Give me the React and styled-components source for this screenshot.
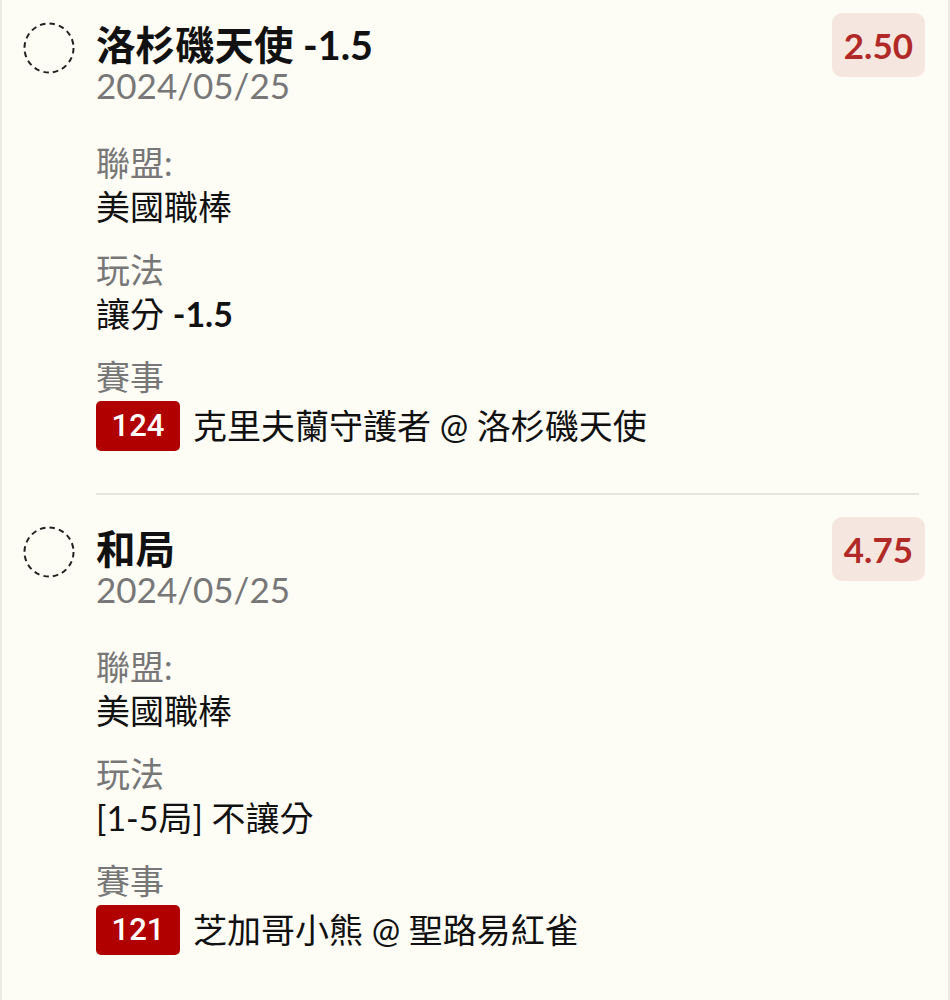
import React from 'react'
import styled, { createGlobalStyle } from 'styled-components'

const GlobalStyle = createGlobalStyle`
    html, body {
        margin: 0;
        background: #fdfcf5;
    }
    body {
        font-family: Lato, "Noto Sans CJK TC", sans-serif;
        color: #111;
    }
`

const Page = styled.div`
    min-height: 1000px;
    box-sizing: border-box;
    border-left: 2px solid #eceae2;
    border-right: 2px solid #eceae2;
    padding: 0 24px 0 21px;
`

const Item = styled.div`
    display: flex;
    gap: 21px;
    padding-top: 32px;

    &:first-child {
        padding-top: 23px;
    }
`

const Check = styled.svg`
    flex: none;
    width: 52px;
    height: 52px;
    margin-top: -1px;
`

const Body = styled.div`
    flex: 1;
    min-width: 0;
    padding-bottom: 42px;
    border-bottom: ${p => (p.$last ? 'none' : '2px solid #e6e4dd')};
    margin-right: 5px;
`

const Head = styled.div`
    display: flex;
    align-items: flex-start;
    justify-content: space-between;
`

const Title = styled.div`
    font-size: 39.5px;
    font-weight: 700;
    line-height: 44px;
    color: #111;
`

const DateText = styled.div`
    font-size: 35px;
    line-height: 36px;
    color: #777;
`

const Odds = styled.div`
    margin: -10px -6px 0 0;
    padding: 0 12px;
    height: 64px;
    min-width: 91px;
    box-sizing: border-box;
    display: flex;
    align-items: center;
    justify-content: center;
    border-radius: 10px;
    background: #f6e6e0;
    color: #b22a27;
    font-size: 35px;
    font-weight: 700;
`

const Details = styled.div`
    margin-top: 38px;
    display: flex;
    flex-direction: column;
    gap: 19px;
`

const Field = styled.div`
    font-size: 34px;
    line-height: 44px;
`

const Label = styled.div`
    color: #777;
`

const Value = styled.div`
    color: #111;
`

const Strong = styled.span`
    font-weight: 700;
`

const Match = styled.div`
    display: flex;
    align-items: center;
    gap: 13px;
    margin-top: 2px;
`

const Code = styled.span`
    display: inline-flex;
    align-items: center;
    justify-content: center;
    height: 50px;
    min-width: 84px;
    box-sizing: border-box;
    padding: 0 14px;
    border-radius: 5px;
    background: #b00000;
    color: #fff;
    font-family: Roboto, sans-serif;
    font-size: 31px;
    font-weight: 500;
`

const CircleIcon = () => (
    <Check viewBox="0 0 52 52">
        <circle cx="26" cy="26" r="24.5" fill="none" stroke="#222" strokeWidth="2" strokeDasharray="5.5 4.1" />
    </Check>
)

const bets = [
    {
        title: '洛杉磯天使 -1.5',
        date: '2024/05/25',
        odds: '2.50',
        league: '美國職棒',
        play: <>讓分 <Strong>-1.5</Strong></>,
        code: '124',
        match: '克里夫蘭守護者 @ 洛杉磯天使',
    },
    {
        title: '和局',
        date: '2024/05/25',
        odds: '4.75',
        league: '美國職棒',
        play: '[1-5局] 不讓分',
        code: '121',
        match: '芝加哥小熊 @ 聖路易紅雀',
    },
]

const App = () => (
    <>
        <GlobalStyle />
        <Page>
            {bets.map((bet, i) => (
                <Item key={bet.code}>
                    <CircleIcon />
                    <Body $last={i === bets.length - 1}>
                        <Head>
                            <div>
                                <Title>{bet.title}</Title>
                                <DateText>{bet.date}</DateText>
                            </div>
                            <Odds>{bet.odds}</Odds>
                        </Head>
                        <Details>
                            <Field>
                                <Label>聯盟:</Label>
                                <Value>{bet.league}</Value>
                            </Field>
                            <Field>
                                <Label>玩法</Label>
                                <Value>{bet.play}</Value>
                            </Field>
                            <Field>
                                <Label>賽事</Label>
                                <Match>
                                    <Code>{bet.code}</Code>
                                    <Value>{bet.match}</Value>
                                </Match>
                            </Field>
                        </Details>
                    </Body>
                </Item>
            ))}
        </Page>
    </>
)

export default App
